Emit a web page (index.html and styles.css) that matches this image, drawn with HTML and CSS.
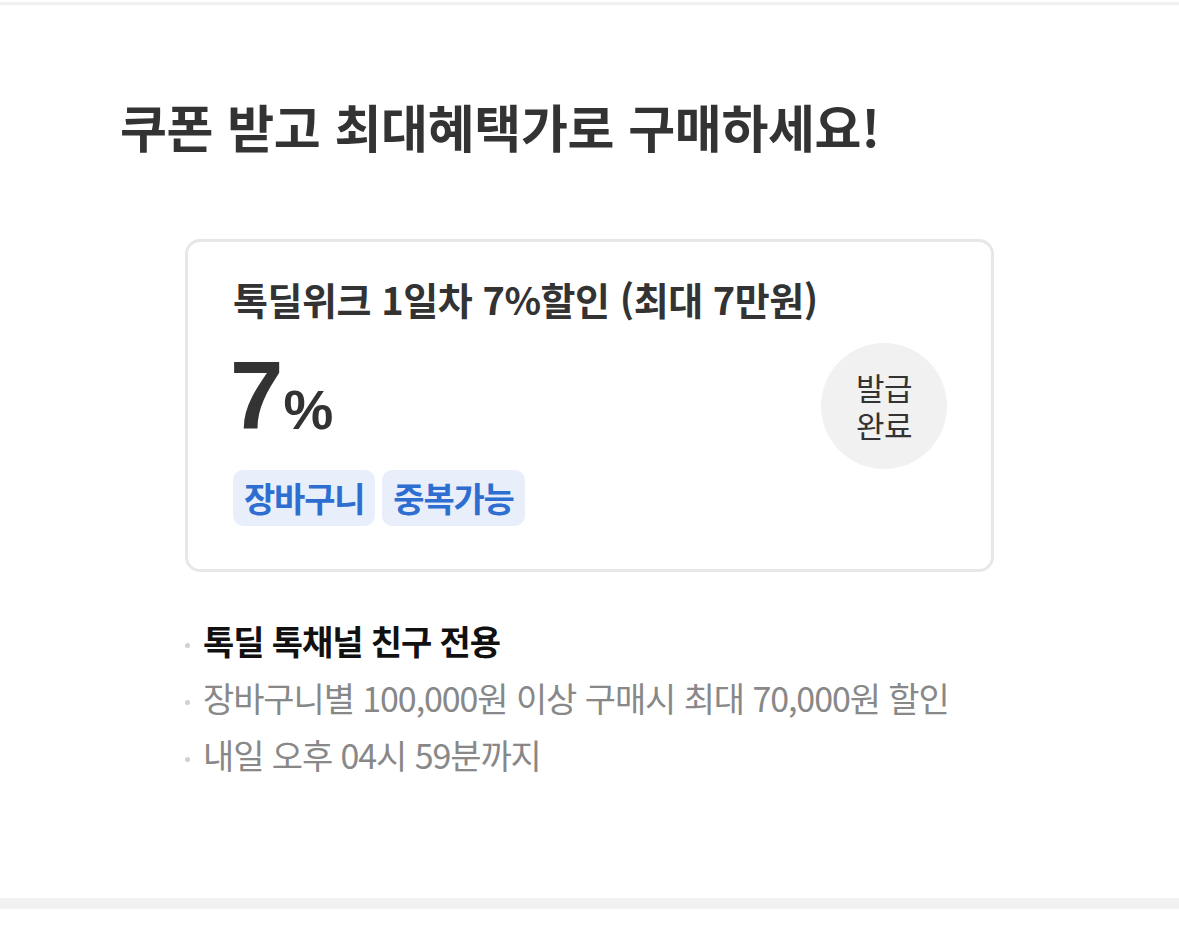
FILE: index.html
```html
<!DOCTYPE html>
<html lang="ko">
<head>
<meta charset="utf-8">
<link rel="stylesheet" href="styles.css">
</head>
<body>
<div class="top-bar"></div>
<section class="coupon-section">
  <h2 class="heading">쿠폰 받고 최대혜택가로 구매하세요!</h2>
  <div class="card">
    <div class="card-main">
      <div class="card-title">톡딜위크 1일차 7%할인 (최대 7만원)</div>
      <div class="rate"><span class="rate-num">7</span><span class="rate-unit">%</span></div>
      <div class="tags">
        <span class="tag">장바구니</span>
        <span class="tag">중복가능</span>
      </div>
    </div>
    <div class="status"><span>발급</span><span>완료</span></div>
  </div>
  <ul class="notes">
    <li class="strong">톡딜 톡채널 친구 전용</li>
    <li>장바구니별 100,000원 이상 구매시 최대 70,000원 할인</li>
    <li>내일 오후 04시 59분까지</li>
  </ul>
</section>
<div class="bottom-bar"></div>
</body>
</html>
```

FILE: styles.css
```css
* { box-sizing: border-box; }
html, body { margin: 0; padding: 0; background: #fff; }
body {
  font-family: "Noto Sans CJK KR", "Noto Sans", sans-serif;
  color: #333;
  width: 1179px;
  height: 925px;
  overflow: hidden;
}
.top-bar {
  margin-top: 2px;
  height: 3px;
  background: #f1f1f1;
}
.coupon-section {
  padding: 89px 0 0 0;
  height: 893px;
}
.heading {
  margin: 0 0 0 120px;
  font-size: 51px;
  line-height: 64px;
  font-weight: 700;
  letter-spacing: -0.3px;
  color: #333;
}
.card {
  margin: 81px 0 0 185px;
  width: 809px;
  height: 333px;
  border: 3px solid #e7e7e7;
  border-radius: 15px;
  display: flex;
  align-items: flex-start;
  justify-content: space-between;
  padding: 32px 44px 0 45px;
}
.card-main {
  display: flex;
  flex-direction: column;
}
.card-title {
  font-size: 38px;
  font-weight: 700;
  line-height: 50px;
  letter-spacing: -0.45px;
  color: #333;
}
.rate {
  margin: 24px 0 0 -3px;
  height: 96px;
  line-height: 96px;
  font-family: "Liberation Sans", sans-serif;
  font-weight: 700;
  color: #333;
  white-space: nowrap;
}
.rate-num {
  font-size: 96px;
}
.rate-unit {
  font-size: 56px;
  line-height: 1;
}
.tags {
  display: flex;
  gap: 7px;
  margin-top: 26px;
}
.tag {
  height: 56px;
  padding: 0 11px;
  border-radius: 10px;
  background: #e8effb;
  color: #2f6ed1;
  font-size: 34px;
  font-weight: 700;
  line-height: 56px;
  letter-spacing: -1.2px;
}
.status {
  align-self: center;
  margin-top: -32px;
  width: 126px;
  height: 126px;
  border-radius: 50%;
  background: #f1f1f1;
  display: flex;
  flex-direction: column;
  align-items: center;
  justify-content: center;
  font-size: 31px;
  line-height: 38px;
  letter-spacing: -0.5px;
  color: #333;
}
.notes {
  list-style: none;
  margin: 40px 0 0 185px;
  padding: 0;
}
.notes li {
  position: relative;
  padding-left: 18px;
  font-size: 34px;
  line-height: 57px;
  letter-spacing: -1.1px;
  color: #888;
}
.notes li::before {
  content: "";
  position: absolute;
  left: 0;
  top: 31px;
  width: 5px;
  height: 5px;
  border-radius: 50%;
  background: #d0d0d0;
}
.notes li.strong {
  color: #111;
  font-weight: 700;
}
.bottom-bar {
  height: 11px;
  background: #f1f1f1;
}
```
